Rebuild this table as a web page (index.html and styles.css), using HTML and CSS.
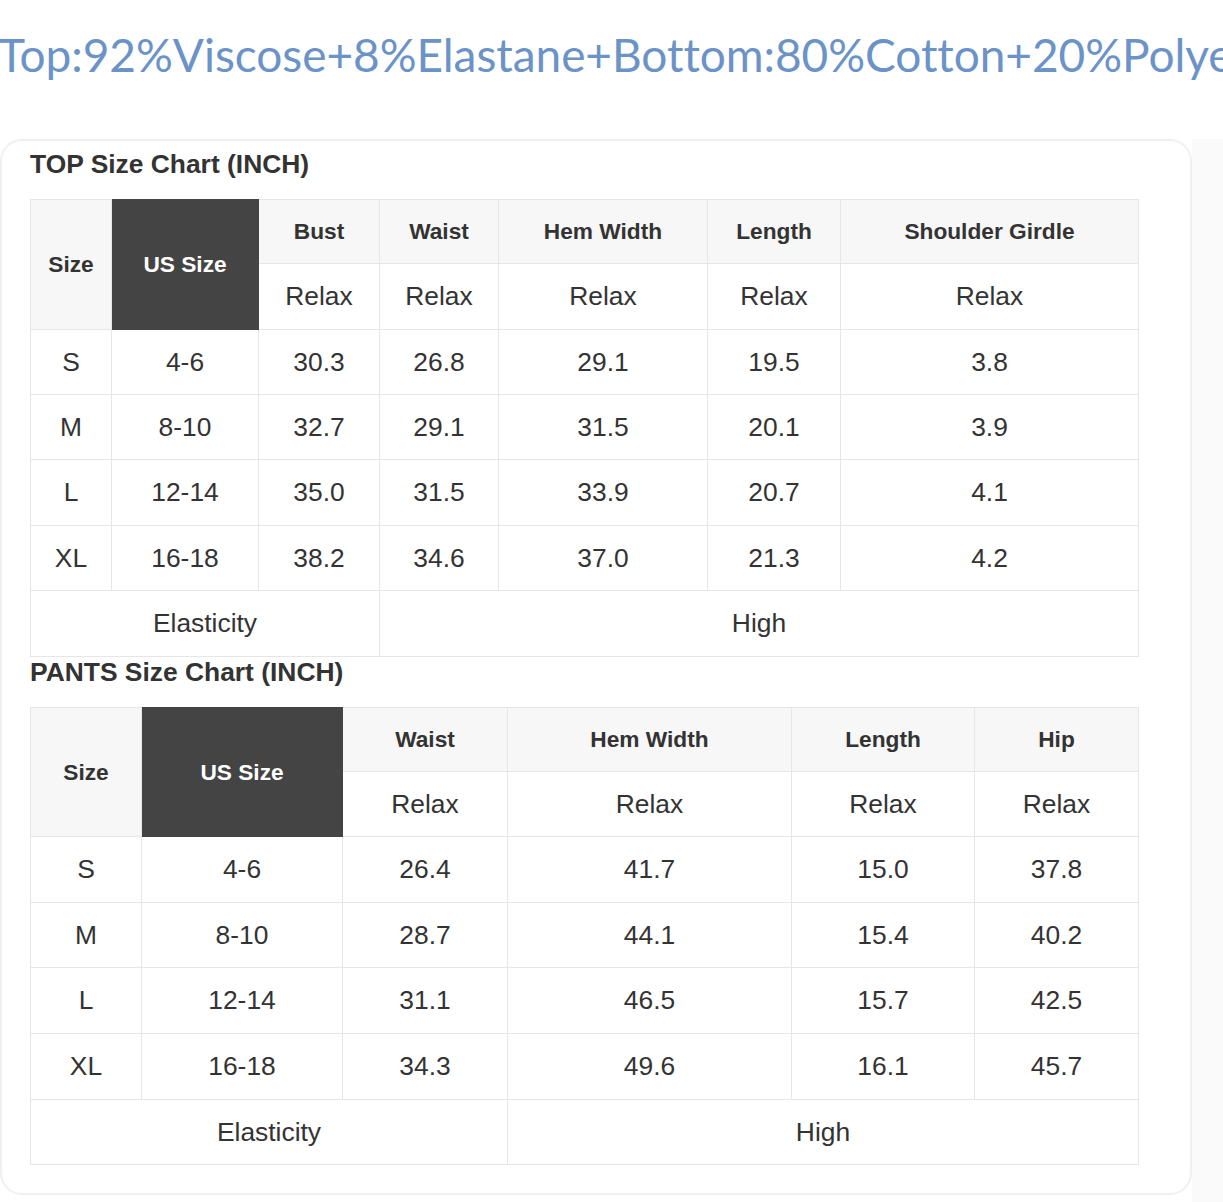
FILE: index.html
```html
<!DOCTYPE html>
<html lang="en">
<head>
<meta charset="utf-8">
<title>Size Chart</title>
<link rel="stylesheet" href="styles.css">
</head>
<body>
<div class="page">
  <div class="material">Top:92%Viscose+8%Elastane+Bottom:80%Cotton+20%Polyester</div>
  <div class="card">
    <h2 class="chart-title">TOP Size Chart (INCH)</h2>
    <table class="chart">
      <colgroup>
        <col class="w81"><col class="w147"><col class="w121"><col class="w119"><col class="w209"><col class="w133"><col class="w298">
      </colgroup>
      <tr class="h64">
        <th rowspan="2">Size</th>
        <th rowspan="2" class="dark">US Size</th>
        <th>Bust</th><th>Waist</th><th>Hem Width</th><th>Length</th><th>Shoulder Girdle</th>
      </tr>
      <tr class="h66 sub">
        <td>Relax</td><td>Relax</td><td>Relax</td><td>Relax</td><td>Relax</td>
      </tr>
      <tr class="h65"><td>S</td><td>4-6</td><td>30.3</td><td>26.8</td><td>29.1</td><td>19.5</td><td>3.8</td></tr>
      <tr class="h65"><td>M</td><td>8-10</td><td>32.7</td><td>29.1</td><td>31.5</td><td>20.1</td><td>3.9</td></tr>
      <tr class="h66"><td>L</td><td>12-14</td><td>35.0</td><td>31.5</td><td>33.9</td><td>20.7</td><td>4.1</td></tr>
      <tr class="h65"><td>XL</td><td>16-18</td><td>38.2</td><td>34.6</td><td>37.0</td><td>21.3</td><td>4.2</td></tr>
      <tr class="h66"><td colspan="3">Elasticity</td><td colspan="4">High</td></tr>
    </table>
    <h2 class="chart-title">PANTS Size Chart (INCH)</h2>
    <table class="chart">
      <colgroup>
        <col class="w111"><col class="w201"><col class="w165"><col class="w284"><col class="w183"><col class="w164">
      </colgroup>
      <tr class="h64">
        <th rowspan="2">Size</th>
        <th rowspan="2" class="dark">US Size</th>
        <th>Waist</th><th>Hem Width</th><th>Length</th><th>Hip</th>
      </tr>
      <tr class="h65 sub">
        <td>Relax</td><td>Relax</td><td>Relax</td><td>Relax</td>
      </tr>
      <tr class="h66"><td>S</td><td>4-6</td><td>26.4</td><td>41.7</td><td>15.0</td><td>37.8</td></tr>
      <tr class="h65"><td>M</td><td>8-10</td><td>28.7</td><td>44.1</td><td>15.4</td><td>40.2</td></tr>
      <tr class="h66"><td>L</td><td>12-14</td><td>31.1</td><td>46.5</td><td>15.7</td><td>42.5</td></tr>
      <tr class="h66"><td>XL</td><td>16-18</td><td>34.3</td><td>49.6</td><td>16.1</td><td>45.7</td></tr>
      <tr class="h65"><td colspan="3">Elasticity</td><td colspan="3">High</td></tr>
    </table>
  </div>
</div>
</body>
</html>
```

FILE: styles.css
```css
html, body {
  margin: 0;
  padding: 0;
  background: #ffffff;
}

.page {
  width: 1223px;
  height: 1202px;
  overflow: hidden;
  background: linear-gradient(to right, #ffffff 0, #ffffff 1192px, #fafafb 1192px);
}

.material {
  height: 139px;
  box-sizing: border-box;
  padding-top: 25px;
  margin-left: -2px;
  font-family: "Lato", "Open Sans", sans-serif;
  font-size: 46px;
  line-height: 60px;
  letter-spacing: -0.05px;
  color: #6b93c8;
  white-space: nowrap;
  background: #ffffff;
}

.card {
  width: 1192px;
  box-sizing: border-box;
  border: 2px solid #eff0f3;
  border-radius: 22px;
  background: #ffffff;
  padding: 8px 0 28px 28px;
}

.chart-title {
  margin: 0;
  font-family: "Liberation Sans", Arial, sans-serif;
  font-size: 26.4px;
  line-height: 30px;
  font-weight: 700;
  color: #333333;
}

.chart {
  border-collapse: collapse;
  table-layout: fixed;
  width: 1108px;
  margin-top: 20px;
  font-family: "Liberation Sans", Arial, sans-serif;
  color: #333333;
}

.chart th,
.chart td {
  border: 1.5px solid #e6e6e6;
  text-align: center;
  vertical-align: middle;
  padding: 0;
}

.chart th {
  background: #f7f7f7;
  font-size: 22.7px;
  font-weight: 700;
  color: #333333;
}

.chart th.dark {
  background: #444444;
  color: #ffffff;
  border-color: #444444;
}

.chart td {
  font-size: 26.4px;
  background: #ffffff;
}

.h64 { height: 64px; }
.h65 { height: 65px; }
.h66 { height: 66px; }

.w81 { width: 81px; }
.w147 { width: 147px; }
.w121 { width: 121px; }
.w119 { width: 119px; }
.w209 { width: 209px; }
.w133 { width: 133px; }
.w298 { width: 298px; }
.w111 { width: 111px; }
.w201 { width: 201px; }
.w165 { width: 165px; }
.w284 { width: 284px; }
.w183 { width: 183px; }
.w164 { width: 164px; }
```
